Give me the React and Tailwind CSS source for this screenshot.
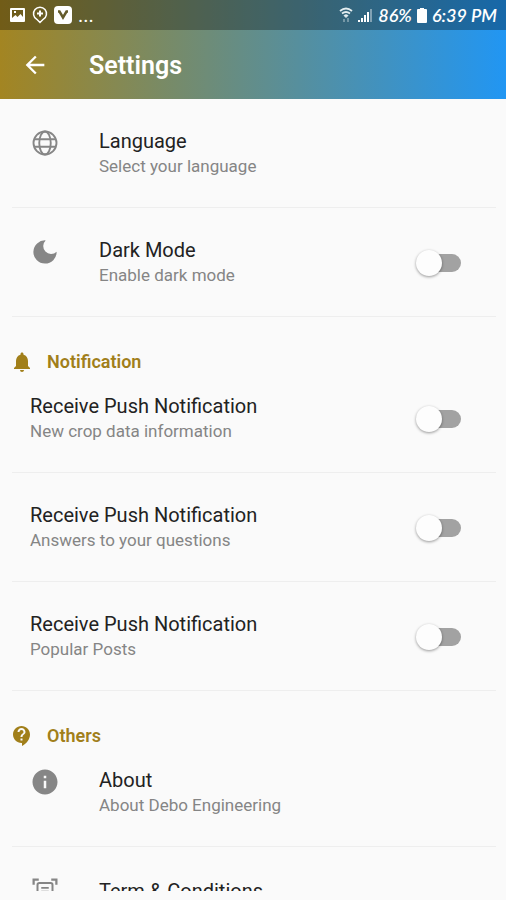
import React, { useState } from 'react';
import { MdArrowBack, MdContactSupport, MdInfo, MdNotifications } from 'react-icons/md';

const GlobeIcon = ({ className }) => (
  <svg className={className} viewBox="0 0 24 24" fill="none" stroke="currentColor" strokeWidth="1.500">
    <circle cx="12" cy="12" r="9.200" />
    <ellipse cx="12" cy="12" rx="4.600" ry="9.200" />
    <path d="M3.500 9h17M3.500 15h17" />
  </svg>
);

const MoonIcon = ({ className }) => (
  <svg className={className} viewBox="0 0 24 24" fill="currentColor">
    <path d="M12.500 2.700A9.300 9.300 0 1 0 21.300 11.800A5.600 5.600 0 1 1 12.500 2.700z" />
  </svg>
);

const ScanIcon = ({ className }) => (
  <svg className={className} viewBox="0 0 24 24" fill="none" stroke="currentColor">
    <path strokeWidth="1.800" d="M2.900 7V2.900H7M17 2.900h4.100V7M2.900 17v4.100H7M17 21.100h4.100V17" />
    <rect strokeWidth="1.600" x="6" y="5.600" width="12" height="13" rx="1.500" />
    <path strokeWidth="1.500" d="M9 9.500h6M9 12.500h6M9 15.500h6" />
  </svg>
);

const StatusBar = () => (
  <div className="flex h-[30px] items-center justify-between bg-black/30 px-[9px] text-white">
    <div className="flex items-center gap-[6px]">
      {/* Picture notification */}
      <svg className="h-[16px] w-[17px]" viewBox="0 0 17 16" fill="currentColor">
        <path
          fillRule="evenodd"
          d="M2 1h13a1 1 0 0 1 1 1v12a1 1 0 0 1-1 1H2a1 1 0 0 1-1-1V2a1 1 0 0 1 1-1zm1 2v8l3.500-3 2 2 3-3 2.500 3V3zm2 1h2v2H5z"
        />
      </svg>
      {/* Location pin */}
      <svg className="h-[18px] w-[16px]" viewBox="0 0 16 18" fill="none" stroke="currentColor">
        <path strokeWidth="1.500" d="M8 16.500 4.800 13.300A6.500 6.500 0 1 1 11.200 13.300z" />
        <path strokeWidth="2" d="M8 4.500v6M5 7.500h6" />
      </svg>
      <svg className="h-[18px] w-[18px]" viewBox="0 0 18 18">
        <rect width="18" height="18" rx="4" fill="#fff" />
        <path d="M4 5.500h1.500L9 11.500l3.500-6H14" fill="none" stroke="#655b2b" strokeWidth="2.500" />
      </svg>
      <span className="text-xl leading-6">...</span>
    </div>
    <div className="flex items-center gap-[5px]">
      {/* Wifi */}
      <svg className="h-[16px] w-[14px]" viewBox="0 0 14 16" fill="none" stroke="#e4eef0">
        <path strokeWidth="1.800" d="M1 4q6-5 12 0M3 6.500q4-3 8 0" />
        <path fill="#e4eef0" d="M5 8.500q2-1.500 4 0L7 10.500z" />
        <path strokeWidth="1.500" opacity=".5" d="M5 15v-3M9 15v-4" />
      </svg>
      {/* Signal */}
      <svg className="h-[16px] w-[15px]" viewBox="0 0 15 16" fill="#fff">
        <path d="M0 13h2v2H0zM3 11h2v4H3zM6 8h2v7H6zM9 5h2v10H9z" />
        <path opacity=".4" d="M12 2h2v13h-2z" />
      </svg>
      <span className="font-[Lato,sans-serif] text-[18px] font-semibold italic leading-6">86%</span>
      <svg className="h-[15px] w-[10px]" viewBox="0 0 10 15" fill="#fff">
        <path d="M3 0h4v1h2a1 1 0 0 1 1 1v12a1 1 0 0 1-1 1H1a1 1 0 0 1-1-1V2a1 1 0 0 1 1-1h2z" />
      </svg>
      <span className="font-[Lato,sans-serif] text-[18px] font-semibold italic leading-6">6:39 PM</span>
    </div>
  </div>
);

const Switch = ({ id }) => {
  const [checked, setChecked] = useState(false);

  return (
    <input
      id={id}
      type="checkbox"
      role="switch"
      checked={checked}
      onChange={() => setChecked(!checked)}
      className="relative mr-[35px] h-[18px] w-[42px] shrink-0 appearance-none rounded-full bg-[#a2a2a2] before:absolute before:-left-[3px] before:-top-[4px] before:h-[26px] before:w-[26px] before:rounded-full before:bg-[#fdfdfd] before:shadow-[0_1px_3px_rgba(0,0,0,0.4)] checked:bg-[#c9b56f] checked:before:left-[19px]"
    />
  );
};

const Row = ({ id, icon: Icon, title, subtitle, toggle, first }) => {
  const Text = toggle ? 'label' : 'a';
  const target = toggle ? { htmlFor: id } : { href: `#${id}` };

  return (
    <li
      className={`flex items-center border-b border-[#eeeeee] pb-[28px] pl-[18px] ${first ? 'pt-[17px]' : 'pt-[29px]'}`}
    >
      {Icon && <Icon className="mr-[39px] h-[30px] w-[30px] shrink-0 self-start text-[#868686]" />}
      <Text {...target} className="flex-1">
        <span className="block text-[20px] leading-[26px] text-[#222222]">{title}</span>
        {subtitle && <span className="block text-[17px] leading-[25px] text-[#858585]">{subtitle}</span>}
      </Text>
      {toggle && <Switch id={id} />}
    </li>
  );
};

const Section = ({ icon: Icon, title, children }) => (
  <section>
    {title && (
      <h2 className="flex h-[59px] items-center gap-[13px] pt-[30px] text-[18px] font-semibold text-[#a17f1a]">
        <Icon className="-ml-[2px] h-[24px] w-[24px]" />
        {title}
      </h2>
    )}
    <ul>{children}</ul>
  </section>
);

const App = () => (
  <div className="flex h-screen flex-col overflow-hidden bg-[#fafafa] pb-[9px] font-[Roboto,sans-serif]">
    <header className="shrink-0 bg-linear-to-r/srgb from-[#a38522] to-[#2196f3]">
      <StatusBar />
      <div className="flex h-[69px] items-center gap-[40px] px-[21px] text-white">
        <button aria-label="Back">
          <MdArrowBack className="h-[28px] w-[28px]" />
        </button>
        <h1 className="pt-[2px] text-[25px] font-semibold">Settings</h1>
      </div>
    </header>

    <main className="min-h-0 flex-1 overflow-hidden pl-[12px] pr-[10px]">
      <Section>
        <Row id="language" icon={GlobeIcon} title="Language" subtitle="Select your language" />
        <Row id="dark-mode" icon={MoonIcon} title="Dark Mode" subtitle="Enable dark mode" toggle />
      </Section>
      <Section icon={MdNotifications} title="Notification">
        <Row id="push-crop" title="Receive Push Notification" subtitle="New crop data information" toggle first />
        <Row id="push-answers" title="Receive Push Notification" subtitle="Answers to your questions" toggle />
        <Row id="push-posts" title="Receive Push Notification" subtitle="Popular Posts" toggle />
      </Section>
      <Section icon={MdContactSupport} title="Others">
        <Row id="about" icon={MdInfo} title="About" subtitle="About Debo Engineering" first />
        <Row id="terms" icon={ScanIcon} title="Term & Conditions" />
      </Section>
    </main>
  </div>
);

export default App;
